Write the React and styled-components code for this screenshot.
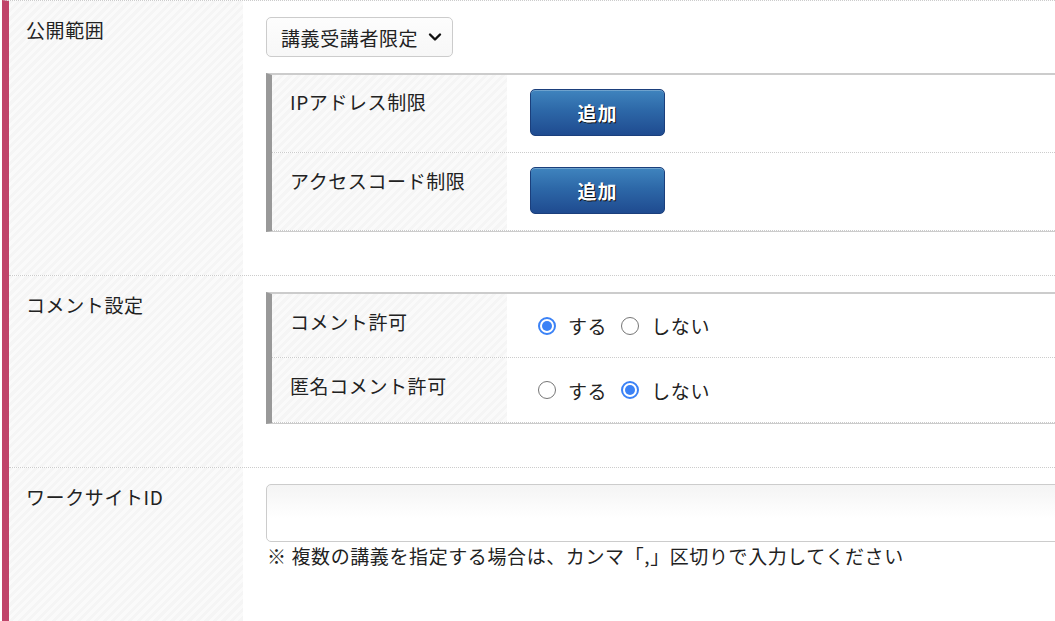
import React from "react";
import styled, { createGlobalStyle } from "styled-components";

const Global = createGlobalStyle`
  html, body { margin: 0; padding: 0; background: #fff; overflow: hidden; }
  body {
    font-family: "Noto Sans CJK JP", "Noto Sans", sans-serif;
    color: #222;
  }
`;

const stripes = `repeating-linear-gradient(135deg, #f5f5f5 0px, #f5f5f5 3px, #fafafa 3px, #fafafa 6px)`;

const Form = styled.div`
  width: 1130px;
  margin-left: 2px;
  border-left: 7px solid #c0446a;
  border-top: 1px dotted #ccc;
`;

const Row = styled.div`
  display: grid;
  grid-template-columns: 234px 1fr;
  border-bottom: 1px dotted #ccc;
  min-height: ${(p) => p.$minH || 0}px;
`;

const Label = styled.div`
  background: ${stripes};
  padding: 15px 17px;
  font-size: 19px;
  line-height: 28px;
  letter-spacing: 0.6px;
`;

const Content = styled.div`
  padding: 16px 0 ${(p) => p.$pb ?? 43}px 23px;
  display: flex;
  flex-direction: column;
  align-items: flex-start;
`;

const SelectBox = styled.div`
  display: flex;
  align-items: center;
  gap: 10px;
  height: 40px;
  box-sizing: border-box;
  padding: 0 10px 0 14px;
  border: 1px solid #ccc;
  border-radius: 5px;
  background: linear-gradient(#fdfdfd, #f7f7f7);
  font-size: 19px;
  letter-spacing: 0.6px;
  margin-bottom: 16px;
`;

const SubTable = styled.div`
  align-self: stretch;
  border-top: 2px solid #ccc;
  border-bottom: 1px solid #ccc;
  border-left: 6px solid #999;
`;

const SubRow = styled.div`
  display: grid;
  grid-template-columns: 235px 1fr;
  border-bottom: 1px dotted #ccc;
  height: ${(p) => p.$h}px;
`;

const SubLabel = styled.div`
  background: ${stripes};
  padding: ${(p) => p.$pt}px 18px 0;
  font-size: 19px;
  line-height: 28px;
  letter-spacing: 0.6px;
`;

const SubContent = styled.div`
  display: flex;
  align-items: ${(p) => (p.$center ? "center" : "flex-start")};
  padding: ${(p) => (p.$center ? "0" : "14px")} 0 0 23px;
`;

const AddButton = styled.button`
  width: 135px;
  height: 47px;
  border: 1px solid #1b3f7c;
  border-radius: 5px;
  background: linear-gradient(#3f84be 0%, #2d68a8 45%, #1f4b90 100%);
  box-shadow: inset 0 1px 0 rgba(255, 255, 255, 0.25);
  color: #fff;
  font-family: "Noto Sans CJK JP", sans-serif;
  font-weight: 700;
  font-size: 19px;
  letter-spacing: 1px;
  text-shadow: 1px 1px 0 #111;
  padding: 0;
  cursor: pointer;
`;

const RadioGroup = styled.div`
  display: flex;
  align-items: center;
  padding-left: 8px;
  font-size: 19px;
  letter-spacing: 0.6px;
`;

const Option = styled.label`
  display: flex;
  align-items: center;
  gap: 12px;
  margin-right: 14px;
`;

const RadioMark = styled.span`
  width: 18px;
  height: 18px;
  box-sizing: border-box;
  border-radius: 50%;
  border: ${(p) => (p.$on ? "2px solid #3b82f6" : "1.5px solid #767676")};
  background: #fff;
  display: flex;
  align-items: center;
  justify-content: center;
  &::after {
    content: "";
    display: ${(p) => (p.$on ? "block" : "none")};
    width: 10px;
    height: 10px;
    border-radius: 50%;
    background: #3b82f6;
  }
`;

const TextInput = styled.div`
  align-self: stretch;
  height: 58px;
  box-sizing: border-box;
  border: 1px solid #ccc;
  border-radius: 5px;
  background: linear-gradient(#f4f4f4, #fff 60%);
`;

const Note = styled.div`
  font-size: 19px;
  line-height: 28px;
  letter-spacing: 0.6px;
  margin-left: 1px;
`;

const Chevron = () => (
  <svg width="14" height="14" viewBox="0 0 14 14">
    <path d="M2 4.5 L7 9.5 L12 4.5" fill="none" stroke="#111" strokeWidth="2.4" strokeLinecap="round" strokeLinejoin="round" />
  </svg>
);

const Radio = ({ on, children }) => (
  <Option>
    <RadioMark $on={on} />
    <span>{children}</span>
  </Option>
);

export default function App() {
  return (
    <>
      <Global />
      <Form>
        <Row>
          <Label>公開範囲</Label>
          <Content>
            <SelectBox>
              講義受講者限定
              <Chevron />
            </SelectBox>
            <SubTable>
              <SubRow $h={77}>
                <SubLabel $pt={13}>IPアドレス制限</SubLabel>
                <SubContent>
                  <AddButton>追加</AddButton>
                </SubContent>
              </SubRow>
              <SubRow $h={77}>
                <SubLabel $pt={14}>アクセスコード制限</SubLabel>
                <SubContent>
                  <AddButton>追加</AddButton>
                </SubContent>
              </SubRow>
            </SubTable>
          </Content>
        </Row>
        <Row>
          <Label>コメント設定</Label>
          <Content>
            <SubTable>
              <SubRow $h={63}>
                <SubLabel $pt={14}>コメント許可</SubLabel>
                <SubContent $center>
                  <RadioGroup>
                    <Radio on>する</Radio>
                    <Radio>しない</Radio>
                  </RadioGroup>
                </SubContent>
              </SubRow>
              <SubRow $h={64}>
                <SubLabel $pt={14}>匿名コメント許可</SubLabel>
                <SubContent $center>
                  <RadioGroup>
                    <Radio>する</Radio>
                    <Radio on>しない</Radio>
                  </RadioGroup>
                </SubContent>
              </SubRow>
            </SubTable>
          </Content>
        </Row>
        <Row $minH={170}>
          <Label>ワークサイトID</Label>
          <Content $pb={60}>
            <TextInput />
            <Note>※ 複数の講義を指定する場合は、カンマ「,」区切りで入力してください</Note>
          </Content>
        </Row>
      </Form>
    </>
  );
}
